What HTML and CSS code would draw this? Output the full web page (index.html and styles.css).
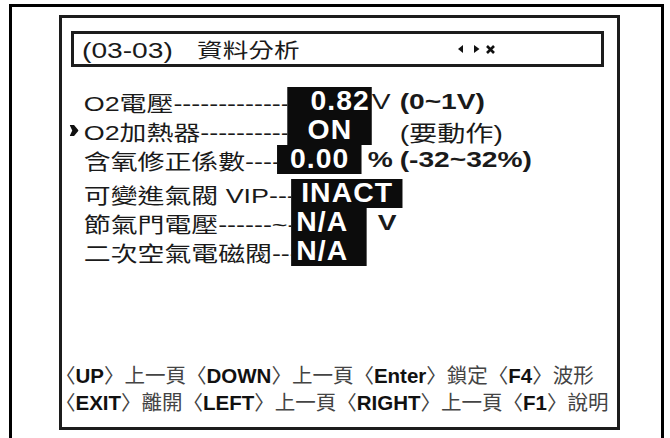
FILE: index.html
```html
<!DOCTYPE html>
<html lang="zh-Hant">
<head>
    <meta charset="UTF-8">
    <title>資料分析</title>
    <link rel="stylesheet" href="styles.css">
</head>
<body>
    <div class="frame">
        <div class="screen">
            <div class="title">
                <div class="title-text">
                    <span>(03-03)</span><span class="title-name">資料分析</span>
                </div>
                <svg class="title-icons" width="37" height="9" viewBox="0 0 37 9">
                    <polygon points="5,0 5,8 0,4" fill="#111"/>
                    <polygon points="16,0 21.5,4 16,8" fill="#111"/>
                    <path d="M29 1 L36 8 M36 1 L29 8" stroke="#111" stroke-width="2.6"/>
                </svg>
            </div>

            <div class="rows">
                <div class="row">
                    <span class="marker"></span>
                    <span class="label label-a">O2電壓--------------------------</span>
                    <span class="value value-a right"><span>0.82</span></span>
                    <span class="unit unit-a">V</span>
                    <span class="range">(0~1V)</span>
                </div>
                <div class="row">
                    <span class="marker">
                        <svg width="7" height="13" viewBox="0 0 7 13"><path d="M0 1 L3.4 1 L7 6.5 L3.4 12 L0 12 L2 6.5 Z" fill="#111"/></svg>
                    </span>
                    <span class="label label-a">O2加熱器--------------------------</span>
                    <span class="value value-a"><span>ON</span></span>
                    <span class="unit unit-a"></span>
                    <span class="range range-cjk">(要動作)</span>
                </div>
                <div class="row">
                    <span class="marker"></span>
                    <span class="label label-b">含氧修正係數--------------------------</span>
                    <span class="value value-a"><span>0.00</span></span>
                    <span class="unit unit-b">%</span>
                    <span class="range">(-32~32%)</span>
                </div>
                <div class="row row-gap">
                    <span class="marker"></span>
                    <span class="label label-c">可變進氣閥 VIP--------------------------</span>
                    <span class="value value-c"><span>INACT</span></span>
                </div>
                <div class="row">
                    <span class="marker"></span>
                    <span class="label label-c">節氣門電壓------~--------------------</span>
                    <span class="value value-d"><span>N/A</span></span>
                    <span class="unit unit-d">V</span>
                </div>
                <div class="row">
                    <span class="marker"></span>
                    <span class="label label-c">二次空氣電磁閥--------------------------</span>
                    <span class="value value-d"><span>N/A</span></span>
                </div>
            </div>

            <div class="footer">
                <div class="keys">〈<b>UP</b>〉上一頁〈<b>DOWN</b>〉上一頁〈<b>Enter</b>〉鎖定〈<b>F4</b>〉波形</div>
                <div class="keys">〈<b>EXIT</b>〉離開〈<b>LEFT</b>〉上一頁〈<b>RIGHT</b>〉上一頁〈<b>F1</b>〉說明</div>
            </div>
        </div>
    </div>
</body>
</html>
```

FILE: styles.css
```css
html, body {
    margin: 0;
    overflow: hidden;
}
body {
    background-color: #fff;
    color: #1a1a1a;
    font-family: "Liberation Sans", "Noto Sans CJK TC", sans-serif;
}
.frame {
    box-sizing: border-box;
    width: 655px;
    height: 434px;
    margin: 4px 0 0 9px;
    padding: 8px 0 0 47px;
    border: 3px solid #000;
    border-bottom: none;
}
.screen {
    box-sizing: border-box;
    width: 561px;
    height: 415px;
    border: 3px solid #1c1c1c;
    display: flex;
    flex-direction: column;
    padding-bottom: 10px;
    overflow: hidden;
}
.title {
    box-sizing: border-box;
    width: 533px;
    height: 36px;
    margin: 13px 0 0 9px;
    padding-left: 8px;
    border: 3px solid #1c1c1c;
    display: flex;
    align-items: center;
}
/* the LCD picture is stretched sideways, so the text is too */
.title-text {
    flex: 0 0 376px;
    font-size: 22px;
    white-space: nowrap;
    transform: scaleX(1.28);
    transform-origin: left center;
}
.title-name {
    margin-left: 19px;
    font-size: 20px;
}
.rows {
    width: 433px;
    margin-top: 20px;
    transform: scaleX(1.28);
    transform-origin: left top;
}
.row {
    display: flex;
    align-items: center;
    height: 29px;
    padding-left: 6px;
    font-size: 21px;
    white-space: nowrap;
}
.row-gap {
    margin-top: 5px;
}
.marker {
    flex: 0 0 11px;
    display: flex;
    align-items: center;
}
.label {
    overflow: hidden;
}
.label-a { flex: 0 0 158.6px; }
.label-b { flex: 0 0 150.8px; }
.label-c { flex: 0 0 161.7px; }
.value {
    align-self: stretch;
    box-sizing: border-box;
    background-color: #0c0c0c;
    color: #fff;
    font-size: 27px;
    font-weight: bold;
    line-height: 29px;
    letter-spacing: 1px;
    text-align: center;
}
/* figures on the LCD are tall and narrow */
.value span {
    display: inline-block;
    transform: scaleX(0.82);
}
.value.right {
    text-align: right;
    padding-right: 1px;
}
.value.right span {
    transform-origin: right center;
}
.value-a { flex: 0 0 66.4px; }
.value-c { flex: 0 0 69.5px; }
.value-d {
    flex: 0 0 59.4px;
    text-align: left;
    padding-left: 4px;
}
.value-d span {
    transform-origin: left center;
}
.unit {
    font-size: 22px;
}
.unit-a { flex: 0 0 21.8px; }
.unit-b {
    flex: 0 0 29.6px;
    box-sizing: border-box;
    padding-left: 4.6px;
    font-weight: bold;
}
.unit-d {
    padding-left: 8.6px;
    font-weight: bold;
}
.range {
    font-size: 22px;
    font-weight: bold;
}
.range-cjk {
    font-weight: normal;
}
.footer {
    margin-top: auto;
    margin-left: -7px;
    font-size: 20px;
    line-height: 27px;
    color: #444;
    white-space: nowrap;
    transform: scaleX(1.025);
    transform-origin: left top;
}
.keys b {
    color: #111;
}
```
